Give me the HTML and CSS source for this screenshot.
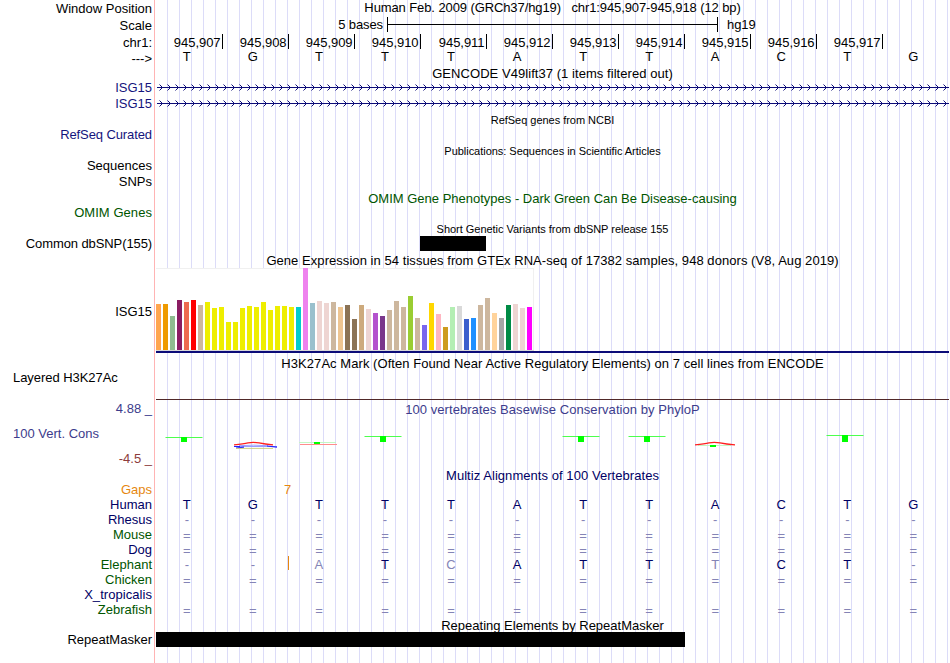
FILE: index.html
```html
<!DOCTYPE html>
<html lang="en">
<head>
  <meta charset="UTF-8" />
  <meta name="viewport" content="width=device-width, initial-scale=1.0"/>
  <title>Genome Browser</title>
  <link rel="stylesheet" href="styles.css">
</head>
<body>
  <div class="browser">
    <div class="row">
      <div class="label low">Window Position</div>
      <div class="track position">Human Feb. 2009 (GRCh37/hg19) &nbsp; chr1:945,907-945,918 (12 bp)</div>
    </div>
    <div class="row scale-row">
      <div class="label">Scale</div>
      <div class="track scale">
        <span class="scale-size">5 bases</span>
        <span class="scale-bar"></span>
        <span class="scale-db">hg19</span>
      </div>
    </div>
    <div class="row">
      <div class="label ruler-label">chr1:</div>
      <div class="track ruler" id="ruler"></div>
    </div>
    <div class="row">
      <div class="label strand">---&gt;</div>
      <div class="track bases" data-seq="TGTTTATTACTG"></div>
    </div>

    <div class="title wide">GENCODE V49lift37 (1 items filtered out)</div>
    <div class="row">
      <div class="label blue">ISG15</div>
      <div class="track gene"></div>
    </div>
    <div class="row">
      <div class="label blue">ISG15</div>
      <div class="track gene"></div>
    </div>

    <div class="title small">RefSeq genes from NCBI</div>
    <div class="row"><div class="label blue tight">RefSeq Curated</div></div>

    <div class="title small">Publications: Sequences in Scientific Articles</div>
    <div class="row"><div class="label">Sequences</div></div>
    <div class="row"><div class="label">SNPs</div></div>

    <div class="title green">OMIM Gene Phenotypes - Dark Green Can Be Disease-causing</div>
    <div class="row"><div class="label green wide">OMIM Genes</div></div>

    <div class="title small">Short Genetic Variants from dbSNP release 155</div>
    <div class="row">
      <div class="label tight">Common dbSNP(155)</div>
      <div class="track"><div class="block snp"></div></div>
    </div>

    <div class="title wide">Gene Expression in 54 tissues from GTEx RNA-seq of 17382 samples, 948 donors (V8, Aug 2019)</div>
    <div class="row gtex-row">
      <div class="label">ISG15</div>
      <div class="track gtex">
        <div class="bars" id="bars"></div>
      </div>
    </div>

    <div class="title wide">H3K27Ac Mark (Often Found Near Active Regulatory Elements) on 7 cell lines from ENCODE</div>
    <div class="row h3k-row">
      <div class="label left">Layered H3K27Ac</div>
      <div class="track h3k"></div>
    </div>

    <div class="row cons-row">
      <div class="label cons-label">
        <span class="max">4.88 _</span>
        <span class="name">100 Vert. Cons</span>
        <span class="min">-4.5 _</span>
      </div>
      <div class="track">
        <div class="cons-title wide">100 vertebrates Basewise Conservation by PhyloP</div>
        <svg class="cons" width="793" height="51" viewBox="156 416 793 51">
          <g fill="#4dff4d">
            <rect x="165.5" y="437" width="37" height="1"/>
            <rect x="364.5" y="436" width="37" height="1"/>
            <rect x="562.5" y="436" width="37" height="1"/>
            <rect x="628.5" y="436" width="37" height="1"/>
            <rect x="826.5" y="435" width="37" height="1"/>
          </g>
          <g fill="#c4f7c4">
            <rect x="299" y="442" width="37" height="1"/>
            <rect x="698" y="445" width="33" height="1"/>
          </g>
          <g fill="#00ff00">
            <rect x="181" y="437" width="6" height="5"/>
            <rect x="380" y="436" width="6" height="6"/>
            <rect x="578" y="436" width="6" height="6"/>
            <rect x="644" y="436" width="6" height="6"/>
            <rect x="842" y="435" width="6" height="7"/>
            <rect x="314" y="442" width="6" height="2"/>
            <rect x="710" y="445" width="6" height="2"/>
          </g>
          <rect x="300" y="444" width="37" height="1" fill="#ff8c8c"/>
          <g fill="none">
            <path d="M234 444.8 Q244 443.8 248 442.9 Q253 442 259 442.9 Q265 444.2 273 444.8" stroke="#ff2020" stroke-width="1.2"/>
            <path d="M234 446.5 H277 M239 445.7 Q254 444.6 268 445.7" stroke="#9c9cff"/>
            <path d="M234 446.5 H240 M267 446 L277 447.2 M236 448 L244 447.2" stroke="#2424ff" stroke-width="1.2"/>
            <path d="M236 448.4 H273" stroke="#c8c878" stroke-width="0.9"/>
            <path d="M695 444.8 Q705 443.8 709 442.9 Q714 442 720 442.9 Q726 444.2 735 444.8" stroke="#ff2020" stroke-width="1.2"/>
          </g>
        </svg>
      </div>
    </div>

    <div class="title navy wide">Multiz Alignments of 100 Vertebrates</div>
    <div class="row align">
      <div class="label orange">Gaps</div>
      <div class="track orange gaps">7</div>
    </div>
    <div class="row align">
      <div class="label navy">Human</div>
      <div class="track bases" data-seq="TGTTTATTACTG"></div>
    </div>
    <div class="row align">
      <div class="label navy">Rhesus</div>
      <div class="track bases" data-seq="------------"></div>
    </div>
    <div class="row align">
      <div class="label green">Mouse</div>
      <div class="track bases" data-seq="============"></div>
    </div>
    <div class="row align">
      <div class="label navy">Dog</div>
      <div class="track bases" data-seq="============"></div>
    </div>
    <div class="row align">
      <div class="label green">Elephant</div>
      <div class="track bases insert" data-seq="--aTcATTtCT-"></div>
    </div>
    <div class="row align">
      <div class="label green">Chicken</div>
      <div class="track bases" data-seq="============"></div>
    </div>
    <div class="row align">
      <div class="label navy wide">X_tropicalis</div>
    </div>
    <div class="row align">
      <div class="label green">Zebrafish</div>
      <div class="track bases" data-seq="============"></div>
    </div>

    <div class="title">Repeating Elements by RepeatMasker</div>
    <div class="row">
      <div class="label">RepeatMasker</div>
      <div class="track"><div class="block repeat"></div></div>
    </div>
  </div>

  <script>
    // position ruler
    const ruler = document.getElementById("ruler");
    for (let pos = 907; pos <= 917; pos++) {
      const tick = document.createElement("span");
      tick.textContent = `945,${pos}`;
      ruler.appendChild(tick);
    }

    // one cell per base, lower case = mismatch (drawn faded)
    document.querySelectorAll(".bases").forEach(row => {
      for (const ch of row.dataset.seq) {
        const cell = document.createElement("span");
        cell.textContent = ch.toUpperCase();
        if (!/[A-Z]/.test(ch)) cell.className = "faded";
        if (ch === "=") cell.className = "faded double";
        row.appendChild(cell);
      }
    });

    // strand arrows every 8px
    let arrows = "";
    for (let x = 6; x < 793; x += 8) arrows += `M${x - 2.5} 4.5l3 3l-3 3`;
    document.querySelectorAll(".gene").forEach(gene => {
      gene.innerHTML = `<svg width="793" height="16"><path d="M1 7.5H793"/><path d="${arrows}"/></svg>`;
    });

    // tissue expression: [colour, height]
    const tissues = [
      ["#ffa54f", 46], ["#ee9a00", 46], ["#8fbc8f", 34], ["#8b1c62", 50], ["#ee6a50", 48], ["#ff0000", 50],
      ["#cdb79e", 45], ["#eeee00", 48], ["#eeee00", 42], ["#eeee00", 43], ["#eeee00", 28], ["#eeee00", 28],
      ["#eeee00", 42], ["#eeee00", 44], ["#eeee00", 43], ["#eeee00", 48], ["#eeee00", 40], ["#eeee00", 44],
      ["#eeee00", 44], ["#eeee00", 43], ["#00cdcd", 43], ["#ee82ee", 82], ["#9ac0cd", 47], ["#eed5d2", 49],
      ["#eed5d2", 47], ["#cdb79e", 48], ["#eec591", 43], ["#8b7355", 45], ["#8b7355", 31], ["#cdaa7d", 45],
      ["#eed5d2", 41], ["#b452cd", 37], ["#7a378b", 34], ["#cdb79e", 40], ["#cdb79e", 49], ["#cdb79e", 43],
      ["#9acd32", 54], ["#cdb79e", 32], ["#7a67ee", 25], ["#ffd700", 47], ["#ffb6c1", 36], ["#cd9b1d", 23],
      ["#b4eeb4", 43], ["#d9d9d9", 44], ["#3a5fcd", 31], ["#1e90ff", 32], ["#cdb79e", 45], ["#cdb79e", 52],
      ["#ffd39b", 37], ["#a6a6a6", 32], ["#008b45", 45], ["#eed5d2", 46], ["#eed5d2", 42], ["#ff00ff", 43]
    ];
    const bars = document.getElementById("bars");
    tissues.forEach(([color, height]) => {
      const bar = document.createElement("i");
      bar.style.background = color;
      bar.style.height = height + "px";
      bars.appendChild(bar);
    });
  </script>
</body>
</html>
```
FILE: styles.css
```css
body {
  margin: 0;
  background: #fff;
  overflow: hidden;
}
.browser {
  width: 949px;
  height: 663px;
  font: 13px/15px "Liberation Sans", Arial, sans-serif;
  color: #000;
  white-space: nowrap;
  /* red divider, then a guide line every 12px */
  background:
    linear-gradient(#ffb4b4, #ffb4b4) 154px 0 / 1px 100% no-repeat,
    repeating-linear-gradient(90deg, #dcdcf8 0 1px, transparent 1px 12px) 167px 0 / 782px 100% no-repeat;
}
.row {
  display: flex;
  height: 16px;
}
.label {
  width: 152px;
  margin-right: 4px;
  flex: none;
  box-sizing: border-box;
  text-align: right;
}
.track {
  width: 793px;
  flex: none;
  box-sizing: border-box;
}
.title {
  height: 15px;
  margin-left: 156px;
  line-height: 17px;
  text-align: center;
}
.small {
  font-size: 11px;
  letter-spacing: -0.03px;
}
.wide {
  letter-spacing: 0.055px;
}
.tight {
  letter-spacing: -0.1px;
}
.blue { color: #14147d; }
.navy { color: #000064; }
.green { color: #005500; }
.orange { color: #e6870f; }

.low {
  padding-top: 1px;
}
.position {
  letter-spacing: -0.1px;
  text-align: center;
}
.scale-row {
  height: 17px;
}
.scale-row .label {
  padding-top: 2px;
}
.scale {
  display: flex;
  padding-top: 1px;
}
.scale-size {
  width: 227px;
  margin-right: 4px;
  letter-spacing: -0.1px;
  text-align: right;
}
.scale-bar {
  width: 329px;
  height: 15px;
  border: solid #000;
  border-width: 0 1px;
  background: linear-gradient(#000, #000) 0 7px / 100% 1px no-repeat;
}
.scale-db {
  margin-left: 9px;
  letter-spacing: -0.1px;
}
.ruler-label {
  padding-top: 2px;
}
.ruler {
  display: flex;
  padding: 1px 0 0 1px;
}
.ruler span {
  width: 66px;
  height: 15px;
  box-sizing: border-box;
  padding-right: 1.5px;
  border-right: 1px solid #000;
  letter-spacing: -0.05px;
  line-height: 17px;
  text-align: right;
}
.strand {
  padding-top: 2px;
}
.bases {
  display: grid;
  grid-template-columns: repeat(12, 66.06px);
}
.bases span {
  padding-right: 4.4px;
  text-align: center;
}
.align {
  height: 15px;
  color: #000064;
}
.bases .faded {
  color: #8484b6;
}
.bases .double {
  padding-top: 1px;
}
.gene svg {
  display: block;
}
.gene path {
  fill: none;
  stroke: #0c0c78;
}
.block {
  height: 15px;
  background: #000;
}
.snp {
  width: 66px;
  margin-left: 264px;
}
.repeat {
  width: 529px;
}
.gtex-row {
  height: 88px;
}
.gtex-row .label {
  padding-top: 37px;
}
.gtex {
  height: 86px;
  padding-top: 1px;
  border-bottom: 2px solid #0c0c78;
}
.bars {
  display: flex;
  align-items: flex-end;
  gap: 2px;
  width: 378px;
  height: 83px;
  box-sizing: border-box;
  border-bottom: 1px solid #d8d8d8;
  background: #fff;
  box-shadow: inset -1px 1px #f0f0f0;
}
.bars i {
  width: 5px;
}
.h3k-row {
  height: 31px;
}
.label.left {
  padding-left: 13px;
  letter-spacing: -0.05px;
  text-align: left;
}
.h3k {
  height: 30px;
  border-bottom: 1px solid #502828;
}
.cons-row {
  height: 66px;
}
.cons-label {
  display: flex;
  flex-direction: column;
  gap: 10px;
}
.cons-label .max {
  color: #3c3c8c;
}
.cons-label .name {
  padding-left: 13px;
  color: #3c3c8c;
  text-align: left;
}
.cons-label .min {
  color: #8c3c3c;
}
.cons-title {
  height: 15px;
  line-height: 17px;
  color: #3c3c8c;
  text-align: center;
}
.cons {
  display: block;
}
.gaps {
  padding-left: 128px;
}
/* orange bar marks the insert */
.insert {
  margin-top: -1px;
  padding-top: 1px;
  background: linear-gradient(#e6870f, #e6870f) 132px 0 / 1px 14px no-repeat;
}
```
